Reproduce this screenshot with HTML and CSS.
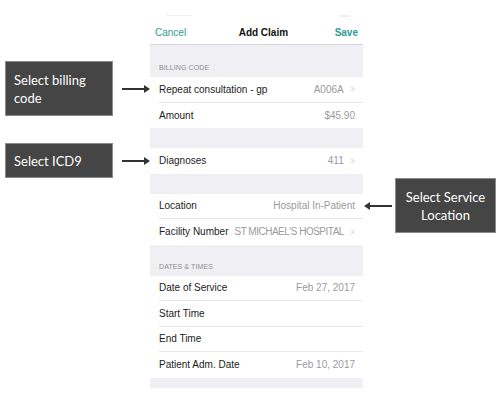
FILE: index.html
```html
<!DOCTYPE html>
<html lang="en">
<head>
    <meta charset="UTF-8">
    <meta name="viewport" content="width=device-width, initial-scale=1.0">
    <title>Add Claim</title>
    <link rel="stylesheet" href="styles.css">
</head>
<body>
    <div class="stage">
        <div class="phone">
            <div class="status-bar">
                <span class="dots"></span>
                <span class="battery"></span>
            </div>
            <div class="nav-bar">
                <span class="nav-link">Cancel</span>
                <span class="nav-title">Add Claim</span>
                <span class="nav-link nav-save">Save</span>
            </div>

            <div class="section-header">BILLING CODE</div>
            <div class="group">
                <div class="row">
                    <span class="label">Repeat consultation - gp</span>
                    <span class="value">A006A</span>
                    <span class="chevron">&gt;</span>
                </div>
                <div class="row">
                    <span class="label">Amount</span>
                    <span class="value">$45.90</span>
                </div>
            </div>

            <div class="spacer"></div>
            <div class="group">
                <div class="row">
                    <span class="label">Diagnoses</span>
                    <span class="value">411</span>
                    <span class="chevron">&gt;</span>
                </div>
            </div>

            <div class="spacer"></div>
            <div class="group">
                <div class="row">
                    <span class="label">Location</span>
                    <span class="value">Hospital In-Patient</span>
                </div>
                <div class="row">
                    <span class="label">Facility Number</span>
                    <span class="value value-caps">ST MICHAEL'S HOSPITAL</span>
                    <span class="chevron">&gt;</span>
                </div>
            </div>

            <div class="section-header section-header-tight">DATES &amp; TIMES</div>
            <div class="group">
                <div class="row">
                    <span class="label">Date of Service</span>
                    <span class="value">Feb 27, 2017</span>
                </div>
                <div class="row">
                    <span class="label">Start Time</span>
                </div>
                <div class="row">
                    <span class="label">End Time</span>
                </div>
                <div class="row">
                    <span class="label">Patient Adm. Date</span>
                    <span class="value">Feb 10, 2017</span>
                </div>
            </div>
            <div class="footer-gap"></div>
        </div>

        <!-- callouts -->
        <div class="callout callout-billing">
            <div class="callout-box">Select billing code</div>
            <span class="arrow arrow-right"></span>
        </div>
        <div class="callout callout-icd">
            <div class="callout-box">Select ICD9</div>
            <span class="arrow arrow-right"></span>
        </div>
        <div class="callout callout-location">
            <span class="arrow arrow-left"></span>
            <div class="callout-box">Select Service Location</div>
        </div>
    </div>
</body>
</html>
```

FILE: styles.css
```css
body {
    margin: 0;
    background-color: #fff;
    font-family: 'Liberation Sans', Arial, sans-serif;
}

.stage {
    position: relative;
    width: 500px;
    height: 393px;
    overflow: hidden;
}

.phone {
    width: 213px;
    margin: 13px 0 0 150px;
    background-color: #efeff4;
}

.status-bar {
    height: 8px;
    background-color: #fff;
    display: flex;
    justify-content: space-between;
    padding: 2px 12px 0 16px;
    box-sizing: border-box;
}

.dots {
    width: 26px;
    height: 1px;
    background-color: #f0f0f0;
}

.battery {
    width: 12px;
    height: 2px;
    background-color: #f0f0f0;
}

.nav-bar {
    height: 24px;
    background-color: #fff;
    border-bottom: 1px solid #d8d8dc;
    box-sizing: border-box;
    display: flex;
    align-items: center;
    justify-content: space-between;
    padding: 0 5px 0 5px;
    font-size: 10px;
}

.nav-link {
    color: #2f9c8f;
}

.nav-save {
    font-weight: bold;
}

.nav-title {
    color: #111;
    font-weight: bold;
    margin-left: 6px;
}

.section-header {
    padding: 19px 0 5px 9px;
    font-size: 7px;
    line-height: 8px;
    color: #8e8e93;
    letter-spacing: 0.1px;
}

.section-header-tight {
    padding-top: 18px;
}

.spacer {
    height: 20px;
}

.footer-gap {
    height: 10px;
}

.group {
    background-color: #fff;
    padding-left: 9px;
}

.row {
    height: 25.5px;
    display: flex;
    align-items: center;
    gap: 6px;
    padding-right: 8px;
    font-size: 10px;
    border-bottom: 1px solid #e8e8ea;
    box-sizing: border-box;
}

.row:last-child {
    border-bottom: none;
}

.label {
    color: #1c1c1c;
    white-space: nowrap;
}

.value {
    margin-left: auto;
    color: #9a9a9e;
    white-space: nowrap;
}

.value-caps {
    letter-spacing: -0.5px;
}

.chevron {
    color: #c7c7cc;
    font-size: 9px;
    transform: scaleX(0.7);
}

.callout {
    position: absolute;
    display: flex;
    align-items: center;
}

.callout-box {
    background-color: #454545;
    border: 1px solid #8a8a8a;
    color: #fff;
    font-family: Lato, sans-serif;
    font-size: 13px;
    line-height: 18px;
    box-sizing: border-box;
}

.callout-billing {
    left: 5px;
    top: 61px;
}

.callout-billing .callout-box {
    width: 108px;
    height: 55px;
    padding: 9px 8px;
}

.callout-icd {
    left: 5px;
    top: 143px;
}

.callout-icd .callout-box {
    width: 108px;
    height: 35px;
    padding: 8px 8px;
}

.callout-location {
    left: 366px;
    top: 178px;
}

.callout-location .callout-box {
    width: 101px;
    height: 55px;
    padding: 9px 4px;
    text-align: center;
}

.arrow {
    position: relative;
    display: block;
    width: 26px;
    height: 2px;
    background-color: #333;
}

.arrow-right {
    margin-left: 9px;
}

.arrow-right::after,
.arrow-left::before {
    content: '';
    position: absolute;
    top: -3px;
    border-top: 4px solid transparent;
    border-bottom: 4px solid transparent;
}

.arrow-right::after {
    right: -2px;
    border-left: 6px solid #333;
}

.arrow-left {
    margin-right: 3px;
}

.arrow-left::before {
    left: -2px;
    border-right: 6px solid #333;
}
```
